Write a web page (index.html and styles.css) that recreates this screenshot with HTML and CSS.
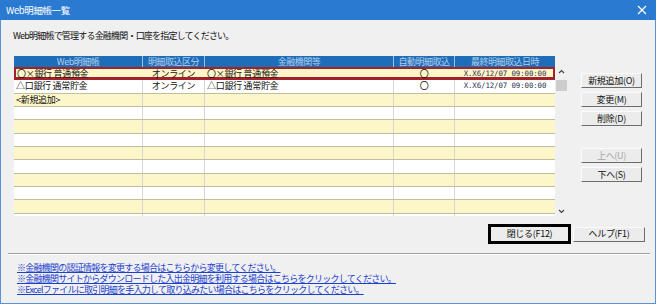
FILE: index.html
```html
<!DOCTYPE html>
<html lang="ja">
<head>
    <meta charset="UTF-8">
    <title>Web明細帳一覧</title>
    <link rel="stylesheet" href="styles.css">
</head>
<body>
    <div class="window">
        <div class="titlebar">
            <span class="title">Web明細帳一覧</span>
            <svg class="close" width="10" height="10" viewBox="0 0 10 10">
                <path d="M1 1 L9 9 M9 1 L1 9" stroke="#fff" stroke-width="1.2"/>
            </svg>
        </div>

        <div class="body">
            <p class="lead">Web明細帳で管理する金融機関・口座を指定してください。</p>

            <div class="main">
                <div class="grid">
                    <div class="grid-head">
                        <div>Web明細帳</div>
                        <div>明細取込区分</div>
                        <div>金融機関等</div>
                        <div>自動明細取込</div>
                        <div>最終明細取込日時</div>
                    </div>
                    <div class="grid-body">
                        <div class="rows">
                            <div class="row odd selected">
                                <div class="left">〇×銀行 普通預金</div>
                                <div class="center">オンライン</div>
                                <div class="left">〇×銀行 普通預金</div>
                                <div class="center">〇</div>
                                <div class="center mono">X.X6/12/07 09:00:00</div>
                            </div>
                            <div class="row">
                                <div class="left">△口銀行 通常貯金</div>
                                <div class="center">オンライン</div>
                                <div class="left">△口銀行 通常貯金</div>
                                <div class="center">〇</div>
                                <div class="center mono">X.X6/12/07 09:00:00</div>
                            </div>
                            <div class="row odd">
                                <div class="left">&lt;新規追加&gt;</div>
                                <div></div><div></div><div></div><div></div>
                            </div>
                            <div class="row"><div></div><div></div><div></div><div></div><div></div></div>
                            <div class="row odd"><div></div><div></div><div></div><div></div><div></div></div>
                            <div class="row"><div></div><div></div><div></div><div></div><div></div></div>
                            <div class="row odd"><div></div><div></div><div></div><div></div><div></div></div>
                            <div class="row"><div></div><div></div><div></div><div></div><div></div></div>
                            <div class="row odd"><div></div><div></div><div></div><div></div><div></div></div>
                            <div class="row"><div></div><div></div><div></div><div></div><div></div></div>
                            <div class="row odd"><div></div><div></div><div></div><div></div><div></div></div>
                            <div class="row"><div></div><div></div><div></div><div></div><div></div></div>
                        </div>
                        <div class="scrollbar">
                            <svg width="13" height="10" viewBox="0 0 13 10">
                                <path d="M4 6 L6.5 3.5 L9 6" fill="none" stroke="#444" stroke-width="1.2"/>
                            </svg>
                            <div class="thumb"></div>
                            <div class="track"></div>
                            <svg width="13" height="10" viewBox="0 0 13 10">
                                <path d="M4 4 L6.5 6.5 L9 4" fill="none" stroke="#444" stroke-width="1.2"/>
                            </svg>
                        </div>
                    </div>
                </div>

                <div class="side">
                    <button class="btn">新規追加(O)</button>
                    <button class="btn">変更(M)</button>
                    <button class="btn">削除(D)</button>
                    <button class="btn disabled gap-top">上へ(U)</button>
                    <button class="btn">下へ(S)</button>
                </div>
            </div>

            <div class="footer-buttons">
                <button class="btn default">閉じる(F12)</button>
                <button class="btn help">ヘルプ(F1)</button>
            </div>

            <div class="separator"></div>

            <div class="links">
                <a href="#">※金融機関の認証情報を変更する場合はこちらから変更してください。</a>
                <a href="#">※金融機関サイトからダウンロードした入出金明細を利用する場合はこちらをクリックしてください。</a>
                <a href="#">※Excelファイルに取引明細を手入力して取り込みたい場合はこちらをクリックしてください。</a>
            </div>
        </div>
    </div>
</body>
</html>
```

FILE: styles.css
```css
body {
    margin: 0;
    background-color: #ffffff;
    font-family: "Noto Sans CJK JP", "Noto Sans", sans-serif;
    font-size: 9px;
    color: #111;
}
.window {
    width: 656px;
    height: 304px;
    box-sizing: border-box;
    border: 1px solid #5b94d6;
    border-top: none;
    background-color: #f0f0f0;
    display: flex;
    flex-direction: column;
}
.titlebar {
    height: 20px;
    margin: 0 -1px;
    background-color: #2b7ad1;
    display: flex;
    align-items: center;
    justify-content: space-between;
    padding: 0 9px 0 6px;
}
.title {
    color: #ffffff;
    font-size: 9.5px;
    letter-spacing: -0.4px;
}
.body {
    padding: 0 0 0 13px;
}
.lead {
    margin: 9px 0 0 -1px;
    line-height: 14px;
    letter-spacing: -0.8px;
}

/* list */
.main {
    display: flex;
    margin-top: 13px;
}
.grid {
    width: 554px;
}
.grid-head {
    width: 541px;
    height: 11px;
    display: grid;
    grid-template-columns: 129px 62px 189px 61px 100px;
    background-color: #1d6db8;
    color: #b3cdea;
    font-size: 9px;
    line-height: 11px;
    letter-spacing: -0.5px;
}
.grid-head div {
    text-align: center;
    border-right: 1px solid #9cc0e6;
    overflow: hidden;
    white-space: nowrap;
}
.grid-head div:last-child {
    border-right: none;
}
.grid-body {
    display: flex;
    height: 149px;
}
.rows {
    width: 541px;
    overflow: hidden;
}
.row {
    display: grid;
    grid-template-columns: 129px 62px 189px 61px 100px;
    height: 13.34px;
    box-sizing: border-box;
    border-bottom: 1px solid #c2bd9e;
    background-color: #ffffff;
    line-height: 12px;
    letter-spacing: -0.3px;
}
.row.odd {
    background-color: #fdf6c9;
}
.row div {
    border-right: 1px solid #d6d6d6;
    white-space: nowrap;
    overflow: hidden;
}
.row div:last-child {
    border-right: none;
}
.row .left {
    padding-left: 2px;
}
.row .center {
    text-align: center;
}
.row .mono {
    font-family: "DejaVu Sans Mono", "Liberation Mono", monospace;
    font-size: 7.4px;
    letter-spacing: -0.1px;
    color: #2a3350;
}
.row.selected {
    box-shadow: inset 0 0 0 2px #a3212b;
    border-bottom-color: #a3212b;
    line-height: 13px;
}
.row.selected div {
    border-right-color: transparent;
}
.row.selected div:first-child {
    padding-left: 3px;
}

.scrollbar {
    width: 13px;
    display: flex;
    flex-direction: column;
    align-items: center;
    background-color: #f0f0f0;
}
.scrollbar svg {
    flex: none;
}
.thumb {
    width: 11px;
    height: 11px;
    margin-top: 3px;
    background-color: #cdcdcd;
}
.track {
    flex: 1;
}

/* buttons */
.side {
    display: flex;
    flex-direction: column;
    margin: 17px 0 0 13px;
    gap: 4px;
}
.btn {
    font-family: inherit;
    font-size: 9px;
    letter-spacing: -0.3px;
    color: #111;
    width: 61px;
    height: 15px;
    padding: 0;
    box-sizing: border-box;
    background-color: #ececec;
    border: 1px solid;
    border-color: #fbfbfb #6c6c6c #6c6c6c #fbfbfb;
    line-height: 12px;
}
.btn.disabled {
    color: #a6a6a6;
}
.gap-top {
    margin-top: 18px;
}
.footer-buttons {
    display: flex;
    justify-content: flex-end;
    align-items: center;
    gap: 2px;
    margin: 8px 10px 0 0;
}
.btn.default {
    width: 83px;
    height: 20px;
    border: 3px solid #000;
}
.btn.help {
    width: 72px;
}
.separator {
    margin: 9px 5px 0 -6px;
    border-top: 1px solid #a0a0a0;
    border-bottom: 1px solid #ffffff;
}
.links {
    display: flex;
    flex-direction: column;
    margin: 7px 0 0 3px;
    line-height: 11px;
    letter-spacing: -0.75px;
}
.links a {
    color: #1b3fcf;
    text-decoration: underline;
    align-self: flex-start;
}
```
